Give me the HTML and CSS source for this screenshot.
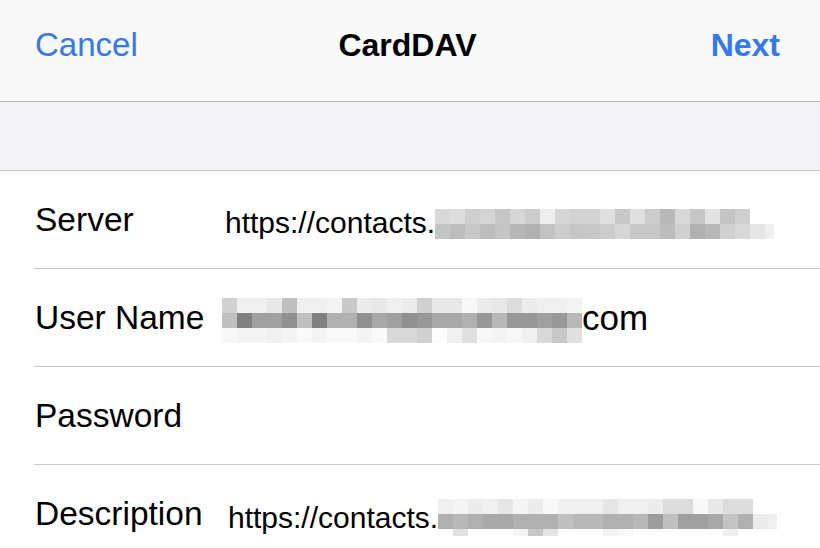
FILE: index.html
```html
<!DOCTYPE html>
<html lang="en">
<head>
<meta charset="utf-8">
<title>CardDAV</title>
<link rel="stylesheet" href="styles.css">
</head>
<body>
<header class="nav">
  <span class="nav-btn nav-cancel">Cancel</span>
  <span class="nav-title">CardDAV</span>
  <span class="nav-btn nav-next">Next</span>
</header>
<div class="band"></div>
<section class="list">
  <div class="row">
    <span class="label">Server</span>
    <span class="value value-server">https://contacts.<span class="mosaic m-server"></span></span>
  </div>
  <div class="row">
    <span class="label">User Name</span>
    <span class="value value-user"><span class="mosaic m-user"></span>com</span>
  </div>
  <div class="row">
    <span class="label">Password</span>
    <span class="value"></span>
  </div>
  <div class="row">
    <span class="label">Description</span>
    <span class="value value-desc">https://contacts.<span class="mosaic m-desc"></span></span>
  </div>
</section>
</body>
</html>
```
FILE: styles.css
```css
html, body {
  margin: 0;
  padding: 0;
  background: #ffffff;
  overflow: hidden;
}
body {
  font-family: "Liberation Sans", Arial, sans-serif;
  color: #000;
  width: 820px;
  height: 548px;
}

.nav {
  display: grid;
  grid-template-columns: 1fr auto 1fr;
  align-items: start;
  height: 72px;
  padding: 29px 40px 0 35px;
  background: #f9f9fa;
  border-bottom: 1px solid #b2b2b4;
  font-size: 32px;
  line-height: 32px;
}
.nav-btn {
  color: #3478f6;
}
.nav-cancel {
  justify-self: start;
  font-size: 33px;
}
.nav-title {
  font-weight: bold;
  justify-self: center;
}
.nav-next {
  justify-self: end;
  font-weight: bold;
}

.band {
  height: 68px;
  background: #f2f2f7;
  border-bottom: 1px solid #c8c7cc;
}

.list {
  background: #fff;
}
.row {
  display: flex;
  height: 97px;
  margin-left: 34px;
  padding-left: 1px;
  border-bottom: 1px solid #c8c7cc;
  white-space: nowrap;
}
.label {
  flex: none;
  width: 190px;
  font-size: 33.5px;
  line-height: 97px;
}
.value {
  font-size: 30px;
  line-height: 97px;
}
.value-server {
  line-height: 103px;
}
.value-user {
  font-size: 35px;
  margin-left: -3px;
}
.value-desc {
  margin-left: 3px;
  line-height: 105px;
}

.mosaic {
  display: inline-block;
  background-repeat: no-repeat;
}
.m-server {
  width: 339px;
  height: 30px;
  vertical-align: -6px;
  background-size: 100% 15px;
  background-position: 0 0, 0 15px;
  background-image:
    linear-gradient(to right, #d8d8d8 0 15px, #dddddd 15px 30px, #cfcfcf 30px 45px, #d4d4d4 45px 60px, #c6c6c6 60px 75px, #d6d6d6 75px 90px, #cccccc 90px 105px, #eeeeee 105px 120px, #d6d6d6 120px 135px, #d3d3d3 135px 150px, #d3d3d3 150px 165px, #e0e0e0 165px 180px, #c8c8c8 180px 195px, #e0e0e0 195px 210px, #cccccc 210px 225px, #b8b8b8 225px 240px, #d8d8d8 240px 255px, #c6c6c6 255px 270px, #e2e2e2 270px 285px, #c4c4c4 285px 300px, #cfcfcf 300px 315px, transparent 315px),
    linear-gradient(to right, #c4c4c4 0 15px, #bdbdbd 15px 30px, #c8c8c8 30px 45px, #bdbdbd 45px 60px, #c4c4c4 60px 75px, #b6b6b6 75px 90px, #b0b0b0 90px 105px, #c2c2c2 105px 120px, #cccccc 120px 135px, #c6c6c6 135px 150px, #c8c8c8 150px 165px, #cccccc 165px 180px, #d6d6d6 180px 195px, #c8c8c8 195px 210px, #c8c8c8 210px 225px, #bcbcbc 225px 240px, #d0d0d0 240px 255px, #b0b0b0 255px 270px, #b8b8b8 270px 285px, #d0d0d0 285px 300px, #d8d8d8 300px 315px, #e6e6e6 315px 330px, #f0f0f0 330px 339px);
}
.m-user {
  width: 360px;
  height: 45px;
  vertical-align: -13px;
  background-size: 100% 15px;
  background-position: 0 0, 0 15px, 0 30px;
  background-image:
    linear-gradient(to right, #d2d2d2 0 15px, #f0f0f0 15px 30px, #f0f0f0 30px 45px, #e8e8e8 45px 60px, #c0c0c0 60px 75px, #f0f0f0 75px 90px, #f0f0f0 90px 105px, #f4f4f4 105px 120px, #c8c8c8 120px 135px, #ececec 135px 150px, #e8e8e8 150px 165px, #f0f0f0 165px 180px, #ececec 180px 195px, #d0d0d0 195px 210px, #e8e8e8 210px 225px, #e8e8e8 225px 240px, #f8f8f8 240px 255px, #ececec 255px 270px, #e8e8e8 270px 285px, #dcdcdc 285px 300px, #ececec 300px 315px, #f0f0f0 315px 330px, #f0f0f0 330px 345px, #f4f4f4 345px 360px),
    linear-gradient(to right, #c0c0c0 0 15px, #808080 15px 30px, #a0a0a0 30px 45px, #a0a0a0 45px 60px, #909090 60px 75px, #c0c0c0 75px 90px, #808080 90px 105px, #b0b0b0 105px 120px, #b0b0b0 120px 135px, #909090 135px 150px, #a8a8a8 150px 165px, #a0a0a0 165px 180px, #909090 180px 195px, #989898 195px 210px, #a8a8a8 210px 225px, #a8a8a8 225px 240px, #b0b0b0 240px 255px, #989898 255px 270px, #b8b8b8 270px 285px, #989898 285px 300px, #989898 300px 315px, #a0a0a0 315px 330px, #989898 330px 345px, #b8b8b8 345px 360px),
    linear-gradient(to right, #f8f8f8 0 15px, #f4f4f4 15px 30px, #f4f4f4 30px 45px, #f0f0f0 45px 60px, #f4f4f4 60px 75px, #fafafa 75px 90px, #f4f4f4 90px 105px, #fafafa 105px 120px, #fafafa 120px 135px, #f4f4f4 135px 150px, #fafafa 150px 165px, #d8d8d8 165px 180px, #d8d8d8 180px 195px, #d0d0d0 195px 210px, #fcfcfc 210px 225px, #f0f0f0 225px 240px, #e0e0e0 240px 255px, #f8f8f8 255px 270px, #f4f4f4 270px 285px, #f8f8f8 285px 300px, #f0f0f0 300px 315px, #d8d8d8 315px 330px, #c8c8c8 330px 345px, #e0e0e0 345px 360px);
}
.m-desc {
  width: 339px;
  height: 37px;
  vertical-align: -8px;
  background-size: 100% 15px, 100% 15px, 100% 7px;
  background-position: 0 0, 0 15px, 0 30px;
  background-image:
    linear-gradient(to right, #f0f0f0 0 15px, #f4f4f4 15px 30px, #ececec 30px 45px, #f0f0f0 45px 60px, #e6e6e6 60px 75px, #f4f4f4 75px 90px, #ececec 90px 105px, #f8f8f8 105px 120px, #f0f0f0 120px 135px, #f0f0f0 135px 150px, #f0f0f0 150px 165px, #e6e6e6 165px 180px, #f0f0f0 180px 195px, #f0f0f0 195px 210px, #ececec 210px 225px, #dcdcdc 225px 240px, #dcdcdc 240px 255px, #f8f8f8 255px 270px, #e8e8e8 270px 285px, #dcdcdc 285px 300px, #dcdcdc 300px 315px, transparent 315px),
    linear-gradient(to right, #b0b0b0 0 15px, #b8b8b8 15px 30px, #b0b0b0 30px 45px, #a8a8a8 45px 60px, #a8a8a8 60px 75px, #b0b0b0 75px 90px, #b0b0b0 90px 105px, #b0b0b0 105px 120px, #c0c0c0 120px 135px, #b8b8b8 135px 150px, #b8b8b8 150px 165px, #b0b0b0 165px 180px, #b0b0b0 180px 195px, #b8b8b8 195px 210px, #9c9c9c 210px 225px, #c0c0c0 225px 240px, #a0a0a0 240px 255px, #a0a0a0 255px 270px, #a8a8a8 270px 285px, #c4c4c4 285px 300px, #b0b0b0 300px 315px, #ececec 315px 330px, #f0f0f0 330px 339px),
    linear-gradient(to right, transparent 0 15px, #e0e0e0 15px 30px, transparent 30px 75px, #f4f4f4 75px 90px, #c8c8c8 90px 105px, #e4e4e4 105px 120px, transparent 120px 165px, #f4f4f4 165px 180px, #f8f8f8 180px 195px, transparent 195px 285px, #f0f0f0 285px 300px, transparent 300px);
}
```
